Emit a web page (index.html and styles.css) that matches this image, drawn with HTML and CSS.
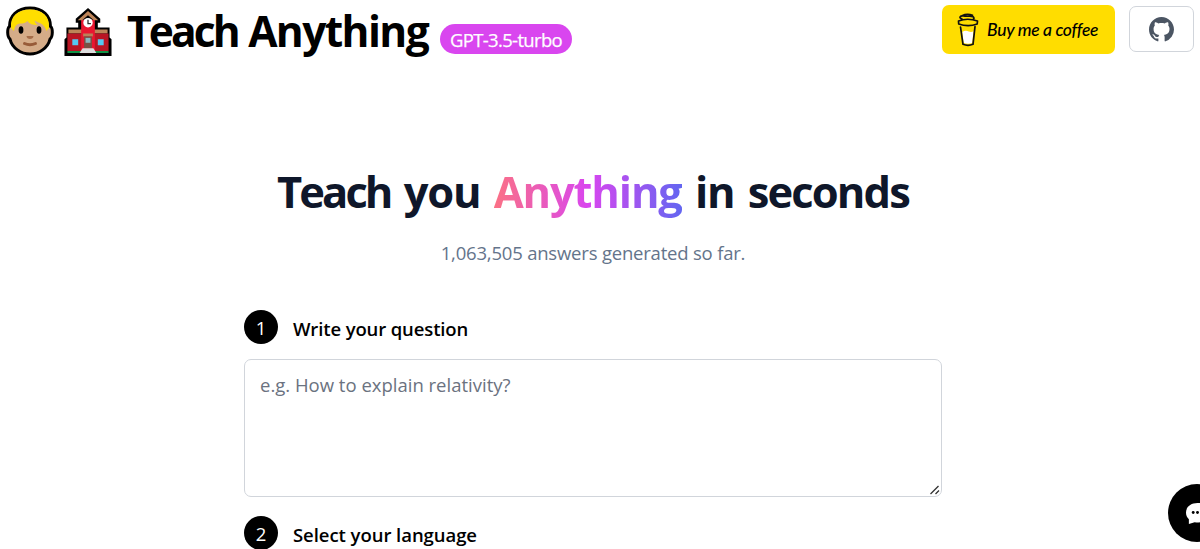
FILE: index.html
```html
<!DOCTYPE html>
<html lang="en">
<head>
<meta charset="utf-8">
<title>Teach Anything</title>
<link rel="stylesheet" href="styles.css">
</head>
<body>
<header class="header">
  <div class="brand">
    <svg class="face" viewBox="0 0 48 50" aria-hidden="true">
      <path d="M24 2C11 2 3.500 10 3.500 20.500 1 22 1 31 4 33c2 9 11 15 20 15s18-6 20-15c3-2 3-11 .5-12.500C44.500 10 37 2 24 2Z" fill="#d5ac88" stroke="#000" stroke-width="3" stroke-linejoin="round"/>
      <path d="M5 22C4 10 12 3.500 24 3.500S44 10 43 22l-2.500 3c-1-4-4-7.500-8-8.500l-4-2c.5 2 1.500 3.500 3 4.500-5 0-8-1-10-4-2 2-4 2.500-8 2.500-4 1-5 4-5.500 7.500Z" fill="#ffde00"/>
      <ellipse cx="15" cy="24" rx="2.400" ry="3.800" fill="#000"/><ellipse cx="33" cy="24" rx="2.400" ry="3.800" fill="#000"/>
      <path d="M20.500 30h7c0 4-7 4-7 0Z" fill="#a56d49"/><path d="M18.500 37.500q5.500 2.500 11 0" fill="none" stroke="#975b38" stroke-width="3" stroke-linecap="round"/>
    </svg>
    <svg class="school" viewBox="0 0 48 50" aria-hidden="true">
      <path d="M24 0 11.500 11v4H14v5H2v10L0 32v17h48V32l-2-2V20H34v-5h2.500v-4Z" fill="#000"/>
      <path d="M4 22h40v4H4Z" fill="#bd8458"/><path d="M3 26h42v18H3Z" fill="#b91524"/>
      <path d="M17 12h14v34H17Z" fill="#e91630"/><path d="M24 3 13.500 12.500H18l6-5 6 5h4.500Z" fill="#bd8458"/>
      <path d="M19 26h10v3H19Z" fill="#b98258"/><circle cx="24" cy="15" r="4.800" fill="#fff"/><path d="M24 12v4h3" fill="none" stroke="#303030" stroke-width="1.300"/>
      <path d="M8 32h6v6H8Zm26 0h6v6h-6Z" fill="#55c8f2"/><path d="M20 29h8v12h-8Z" fill="#795044"/><path d="M21.500 30.500h5v5h-5Z" fill="#8bb6bf"/>
      <path d="M3 44h42v2H3Z" fill="#119447"/><path d="M18.500 41h11l3 5h-17Z" fill="#dedede"/>
    </svg>
    <h1 class="brand-name"><span class="brand-teach">Teach</span> Anything</h1>
    <span class="badge">GPT-3.5-turbo</span>
  </div>
  <nav class="actions">
    <a class="coffee">
      <svg class="cup" viewBox="0 0 24 34" aria-hidden="true">
        <path d="M6.300 19q3-2 6.500-.5 3 1 4.700-.5l-1.300 12q-4 1.500-8.500 0Z" fill="#fff"/>
        <g fill="none" stroke="#111" stroke-width="1.700" stroke-linecap="round" stroke-linejoin="round"><path d="M6 6C2.500 5 4 2.500 7.500 3c4 .8 7-.5 9.500.7C18.500 5 18 6 17 6.500M6 2.700q5-2.500 10.500-.5M2.500 8q9-3.500 19 0l-.3 3q-9 3.300-18.500 0ZM4.500 14 7 31.300q5 2 10 0l2-17.600"/></g>
      </svg>
      <span class="coffee-label">Buy me a coffee</span>
    </a>
    <a class="github">
      <svg class="octocat" viewBox="0 0 16 16" aria-label="GitHub"><path d="M8 0C3.580 0 0 3.580 0 8c0 3.540 2.290 6.530 5.470 7.590.4.070.55-.17.55-.38 0-.19-.01-.82-.01-1.490-2.010.37-2.530-.49-2.690-.94-.09-.23-.48-.94-.82-1.130-.28-.15-.68-.52-.01-.53.63-.01 1.080.58 1.230.82.72 1.210 1.870.87 2.330.66.07-.52.28-.87.51-1.070-1.780-.2-3.640-.89-3.640-3.950 0-.87.31-1.590.82-2.150-.08-.2-.36-1.020.08-2.120 0 0 .67-.21 2.200.82.64-.18 1.320-.27 2-.27s1.360.09 2 .27c1.530-1.040 2.200-.82 2.200-.82.44 1.100.16 1.920.08 2.120.51.56.82 1.270.82 2.150 0 3.070-1.870 3.750-3.650 3.950.29.25.54.73.54 1.480 0 1.070-.01 1.930-.01 2.200 0 .21.15.46.55.38A8.013 8.013 0 0 0 16 8c0-4.420-3.580-8-8-8Z"/></svg>
    </a>
  </nav>
</header>
<main class="main">
  <h2 class="hero"><span class="hero-teach">Teach</span> you <span class="gradient">Anything</span> in <span class="hero-seconds">seconds</span></h2>
  <p class="count">1,063,505 answers generated so far.</p>
  <form class="form">
    <div class="step"><span class="number">1</span><label class="question-label" for="question">Write your question</label></div>
    <div class="field">
      <textarea class="question" id="question" placeholder="e.g. How to explain relativity?"></textarea>
      <svg class="grip" viewBox="0 0 12 12" aria-hidden="true"><path d="m1.500 10 8-8M6.500 10 10 6.500"/></svg>
    </div>
    <div class="step"><span class="number">2</span><span class="language-label">Select your language</span></div>
  </form>
</main>
<button class="chat" type="button" aria-label="Chat"><svg class="bubble" viewBox="0 0 26 24"><path d="M13 1C6 1 1 5 1 11c0 3 1 5 3 7v5l6-2c9 2 15-3 15-10S20 1 13 1Z" fill="#fff"/><circle cx="8.500" cy="11" r="1.500"/><circle cx="13" cy="11" r="1.500"/><circle cx="17.500" cy="11" r="1.500"/></svg></button>
</body>
</html>
```
FILE: styles.css
```css
* { box-sizing: border-box; }
body { margin: 0; height: 549px; overflow: hidden; background: #fff; color: #000; font-family: "Open Sans", "Noto Sans", sans-serif; }
h1, h2, p { margin: 0; white-space: nowrap; }
.header { height: 64px; padding: 5px 6px 0 6px; display: flex; justify-content: space-between; align-items: flex-start; }
.brand { display: flex; align-items: flex-start; }
.face { width: 48px; height: 50px; margin-top: 1px; }
.school { width: 48px; height: 49px; margin: 3px 0 0 10px; }
.brand-name { margin-left: 15px; width: 313px; font-size: 42.500px; line-height: 52px; font-weight: 700; letter-spacing: -1.600px; word-spacing: 1px; }
.brand-teach { letter-spacing: -2.900px; }
.badge { margin-top: 19px; width: 132px; height: 30px; border-radius: 15px; background: #d946ef; color: #fff; font-size: 18.500px; font-weight: 500; line-height: 31px; text-align: center; letter-spacing: -.65px; white-space: nowrap; -webkit-text-stroke: .25px #fff; }
.actions { display: flex; gap: 14px; }
.coffee { width: 173px; height: 49px; padding-left: 14px; display: flex; align-items: center; border-radius: 7px; background: #fd0; }
.cup { width: 24px; height: 34px; }
.coffee-label { margin-left: 7px; font-family: Lato, sans-serif; font-size: 17.500px; font-style: italic; font-weight: 500; letter-spacing: -.3px; white-space: nowrap; }
.github { width: 65px; height: 46px; margin-top: 1px; border: 1px solid #d1d5db; border-radius: 7px; display: flex; align-items: center; justify-content: center; }
.octocat { width: 25px; height: 25px; fill: #4b5563; }
.main { width: 698px; margin-left: 244px; padding-top: 98px; }
.hero { height: 60px; line-height: 60px; text-align: center; font-size: 43.500px; font-weight: 700; letter-spacing: -1.150px; word-spacing: 3px; color: #0f172a; }
.hero-teach { letter-spacing: -2.900px; }
.hero-seconds { letter-spacing: -1.850px; }
.gradient { color: transparent; background: linear-gradient(to right, #fb7185, #d946ef, #6366f1); background-clip: text; -webkit-background-clip: text; }
.count { margin-top: 16px; height: 30px; font-size: 18.500px; line-height: 30px; letter-spacing: -.2px; color: #64748b; text-align: center; }
.form { margin-top: 41px; }
.step { display: flex; align-items: center; height: 35px; font-size: 18.500px; }
.number { width: 34px; height: 34px; border-radius: 50%; background: #000; color: #fff; text-align: center; line-height: 35px; }
.question-label, .language-label { margin-left: 15px; padding-top: 3px; font-weight: 600; white-space: nowrap; }
.question-label { letter-spacing: -.13px; }
.language-label { letter-spacing: -.05px; }
.field { position: relative; height: 138px; margin: 15px 0 18px; }
.question { display: block; width: 698px; height: 138px; padding: 11px 15px; border: 1px solid #d1d5db; border-radius: 7px; font: 18.500px/28px "Open Sans", "Noto Sans", sans-serif; resize: none; }
.question::placeholder { color: #6b7280; }
.grip { position: absolute; right: 1px; bottom: 1px; width: 12px; height: 12px; fill: none; stroke: #333; stroke-width: 1.300; }
.chat { position: absolute; left: 1168px; top: 484px; width: 58px; height: 58px; padding: 0; border: 0; border-radius: 50%; background: #000; display: flex; align-items: center; justify-content: center; }
.bubble { width: 25px; height: 23px; }
```
